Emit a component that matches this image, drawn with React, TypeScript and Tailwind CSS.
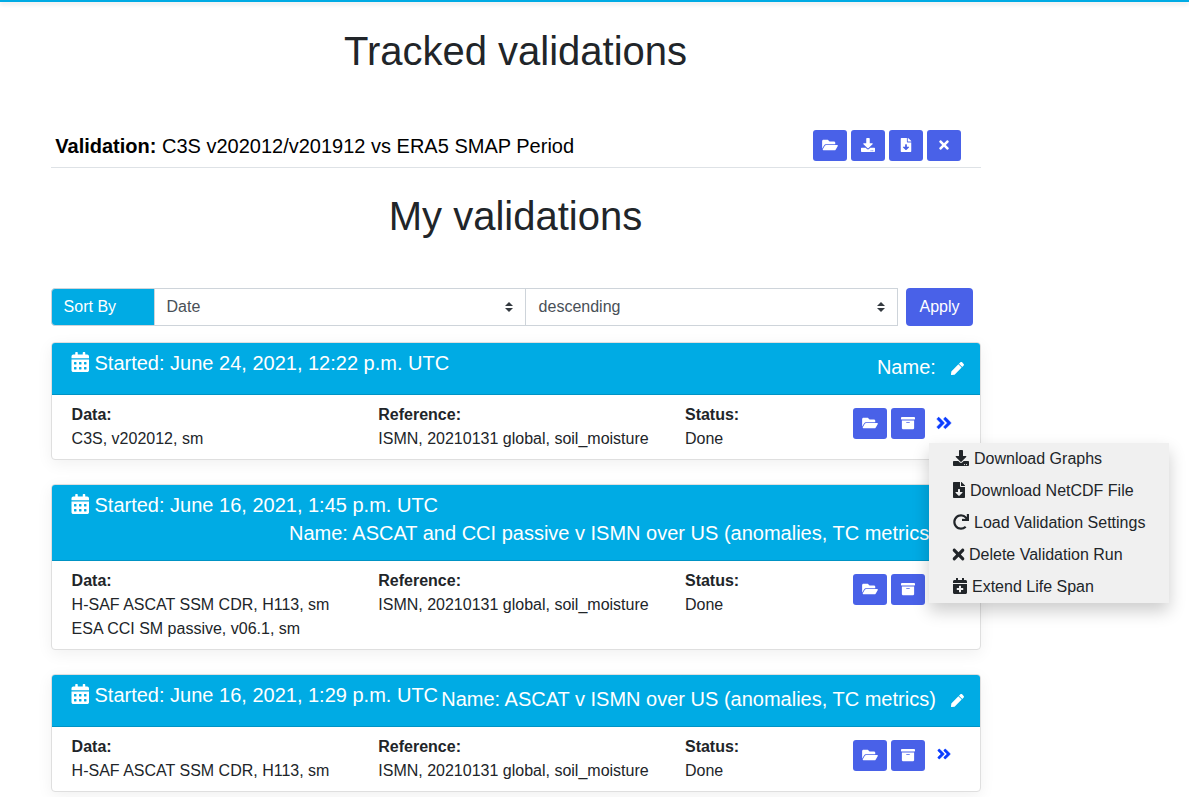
import type { ReactNode } from "react";
import {
  FaAngleDoubleRight, FaArchive, FaCalendarAlt, FaCalendarPlus, FaDownload,
  FaFileDownload, FaFolderOpen, FaPen, FaRedo, FaTimes,
} from "react-icons/fa";

function IconButton({ children }: { children: ReactNode }) {
  return (
    <button className="flex h-[31px] w-[34px] shrink-0 items-center justify-center rounded-[3px] bg-[#4961e8] pb-[2px] text-sm text-white">
      {children}
    </button>
  );
}

function SelectBox({ value, className }: { value: string; className: string }) {
  return (
    <div className={`flex items-center justify-between border border-l-0 border-[#ced4da] pr-3 text-[#495057] ${className}`}>
      <span>{value}</span>
      <svg viewBox="0 0 4 5" className="h-[10px] w-2" fill="#343a40">
        <path d="M2 0L0 2h4zm0 5L0 3h4z" />
      </svg>
    </div>
  );
}

interface Run {
  started: string;
  name: string;
  data: string[];
  reference: string;
  open?: boolean;
}

const runs: Run[] = [
  { started: "June 24, 2021, 12:22 p.m. UTC", name: "", data: ["C3S, v202012, sm"], reference: "ISMN, 20210131 global, soil_moisture", open: true },
  {
    started: "June 16, 2021, 1:45 p.m. UTC",
    name: "ASCAT and CCI passive v ISMN over US (anomalies, TC metrics)",
    data: ["H-SAF ASCAT SSM CDR, H113, sm", "ESA CCI SM passive, v06.1, sm"],
    reference: "ISMN, 20210131 global, soil_moisture",
  },
  {
    started: "June 16, 2021, 1:29 p.m. UTC",
    name: "ASCAT v ISMN over US (anomalies, TC metrics)",
    data: ["H-SAF ASCAT SSM CDR, H113, sm"],
    reference: "ISMN, 20210131 global, soil_moisture",
  },
];

function RunCard({ run }: { run: Run }) {
  return (
    <article className="rounded border border-[#dfdfdf] bg-white shadow-[0_4px_16px_rgba(0,0,0,0.06)]">
      <header className="flex flex-wrap items-start justify-between rounded-t-[3px] border-b border-[#0093c4] bg-[#00abe4] py-2 pl-[19px] pr-4 text-xl leading-6 text-white">
        <div className="flex items-center gap-[5px]">
          <FaCalendarAlt className="mb-[2px] h-5 w-[18.5px]" />
          <span>Started: {run.started}</span>
        </div>
        <div className="ml-auto flex h-[35px] items-start">
          <span className="pt-1">Name: {run.name}</span>
          <button className="ml-[15.2px] mt-[10.5px]"><FaPen className="size-[13px]" /></button>
        </div>
      </header>
      <div className="flex py-2 pl-[19.6px] leading-6">
        <div className="w-[306.7px]">
          <div className="font-bold">Data:</div>
          {run.data.map((item) => <div key={item}>{item}</div>)}
        </div>
        <div className="w-[306.7px]">
          <div className="font-bold">Reference:</div>
          <div>{run.reference}</div>
        </div>
        <div className="w-[168px]">
          <div className="font-bold">Status:</div>
          <div>Done</div>
        </div>
        <div className="flex h-[31px] items-center gap-1 pt-[10px]">
          <IconButton><FaFolderOpen className="h-[14px] w-[16px]" /></IconButton>
          <IconButton><FaArchive /></IconButton>
          <FaAngleDoubleRight
            strokeWidth={14}
            className={`text-[#0a3cff] ${run.open ? "mb-[2px] ml-[6.5px] size-[18px]" : "mb-[3px] ml-[7.5px] size-4"}`}
          />
        </div>
      </div>
    </article>
  );
}

const menu = [
  { icon: <FaDownload />, label: "Download Graphs" },
  { icon: <FaFileDownload className="w-3" />, label: "Download NetCDF File" },
  { icon: <FaRedo />, label: "Load Validation Settings" },
  { icon: <FaTimes className="h-[17px] w-[11px] scale-110" />, label: "Delete Validation Run" },
  { icon: <FaCalendarPlus className="w-[14px]" />, label: "Extend Life Span" },
];

export default function App() {
  return (
    <div className="relative h-[797px] overflow-hidden bg-white font-['Liberation_Sans',Arial,sans-serif] text-base text-[#212529]">
      <div className="h-[2px] bg-[#00abe4] shadow-[0_2px_4px_rgba(0,0,0,0.15)]" />
      <main className="ml-[51px] w-[930px] pt-[25px]">
        <h1 className="pr-px text-center text-[40px] leading-[48px]">Tracked validations</h1>
        <section className="mt-[55px] flex h-[38px] items-start justify-between border-b border-[#dee2e6] pl-[4.3px] pr-5 text-black">
          <div className="pt-1 text-xl leading-6"><b>Validation:</b> C3S v202012/v201912 vs ERA5 SMAP Period</div>
          <div className="flex gap-1">
            <IconButton><FaFolderOpen className="h-[14px] w-[16px]" /></IconButton>
            <IconButton><FaDownload /></IconButton>
            <IconButton><FaFileDownload /></IconButton>
            <IconButton><FaTimes className="size-[14px]" /></IconButton>
          </div>
        </section>
        <h1 className="mt-6 pr-px text-center text-[40px] leading-[48px]">My validations</h1>
        <div className="mt-12 flex h-[38px]">
          <div className="flex w-[104px] items-center rounded-l border border-[#ced4da] bg-[#00abe4] pl-[11.6px] text-white">Sort By</div>
          <SelectBox value="Date" className="w-[371px] pl-[11.5px]" />
          <SelectBox value="descending" className="w-[372px] pl-[12.6px]" />
          <button className="ml-2 w-[67px] rounded bg-[#4961e8] text-white">Apply</button>
        </div>
        <div className="mt-4 flex flex-col gap-6">
          {runs.map((run) => <RunCard key={run.started} run={run} />)}
        </div>
      </main>
      <nav className="absolute left-[929px] top-[443px] w-60 bg-[#f0f0f0] shadow-[0_8px_16px_rgba(0,0,0,0.2)]">
        {menu.map((item) => (
          <div key={item.label} className="flex h-8 items-center gap-[5px] pl-6">
            <span className="pb-[2px]">{item.icon}</span>
            <span className="whitespace-nowrap">{item.label}</span>
          </div>
        ))}
      </nav>
    </div>
  );
}
